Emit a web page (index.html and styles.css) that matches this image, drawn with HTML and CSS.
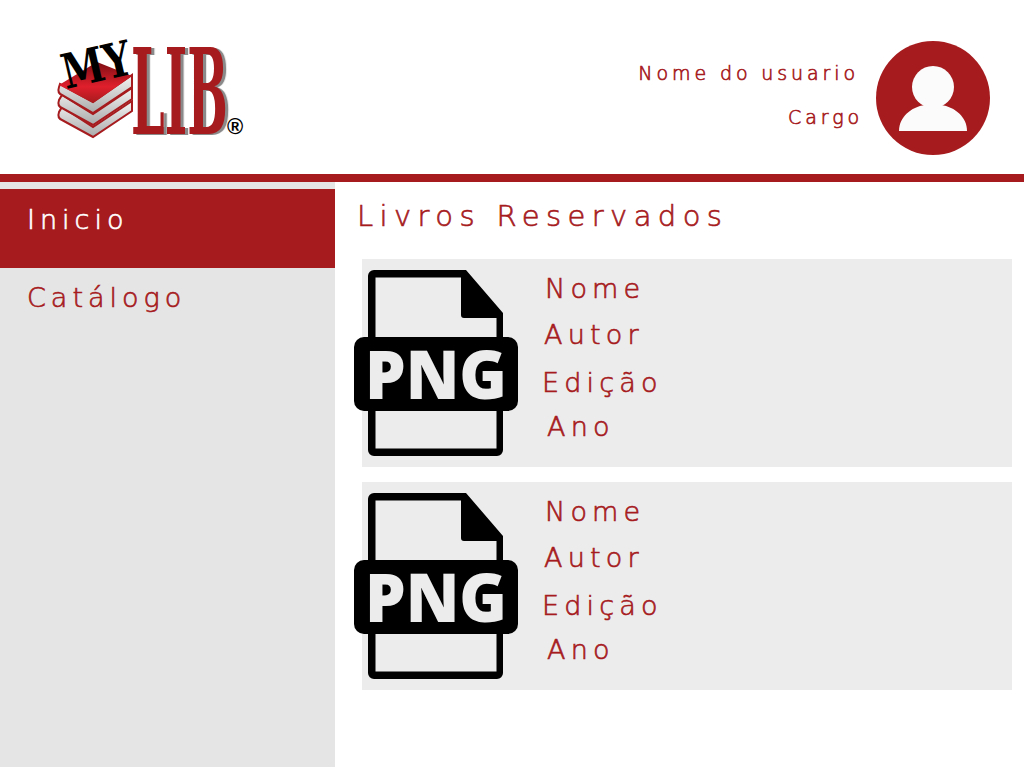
FILE: index.html
```html
<!DOCTYPE html>
<html lang="pt-BR">
<head>
    <meta charset="UTF-8">
    <meta name="viewport" content="width=device-width, initial-scale=1.0">
    <title>MyLib - Livros Reservados</title>
    <link rel="stylesheet" href="styles.css">
</head>
<body>

    <!-- Cabecalho -->
    <header>
        <svg class="logo" viewBox="40 10 220 160" width="220" height="160">
            <defs>
                <linearGradient id="capa" x1="0" y1="0" x2="0" y2="1">
                    <stop offset="0" stop-color="#7d0f14"/>
                    <stop offset="0.6" stop-color="#e01f2c"/>
                    <stop offset="1" stop-color="#a61b1e"/>
                </linearGradient>
                <linearGradient id="folhas" x1="0" y1="0" x2="0" y2="1">
                    <stop offset="0" stop-color="#f4f4f4"/>
                    <stop offset="1" stop-color="#aaaaaa"/>
                </linearGradient>
            </defs>
            <path d="M59 112 Q57 118 62 120 L93 137 L132 111 V101 L93 127 L62 107 Z" fill="url(#folhas)" stroke="#a61b1e" stroke-width="2"/>
            <path d="M59 100 Q57 106 62 108 L93 125 L132 99 V88 L93 114 L62 95 Z" fill="url(#folhas)" stroke="#a61b1e" stroke-width="2"/>
            <path d="M59 87 Q57 93 62 95 L93 113 L132 87 V75 L93 102 L60 84 Z" fill="url(#folhas)" stroke="#a61b1e" stroke-width="2"/>
            <path d="M59 85 L97 62 L132 76 L93 103 Z" fill="url(#capa)"/>
            <text class="logo-lib" transform="translate(131 134) scale(0.4 1)">LIB</text>
            <text class="logo-my" transform="translate(66 89) rotate(-13) scale(0.8 1)">MY</text>
            <text class="logo-reg" x="227" y="134">®</text>
        </svg>

        <div class="usuario">
            <div class="usuario-textos">
                <p class="usuario-nome">Nome do usuario</p>
                <p class="usuario-cargo">Cargo</p>
            </div>
            <svg class="avatar" viewBox="0 0 114 114" width="114" height="114">
                <circle cx="57" cy="57" r="57" fill="#a61b1e"/>
                <circle cx="57" cy="46" r="21" fill="#fbfbfb"/>
                <path d="M23 90 C23 76 35 66 49 64 H65 C79 66 91 76 91 90 Z" fill="#fbfbfb"/>
            </svg>
        </div>
    </header>

    <!-- Conteudo -->
    <div class="pagina">
        <nav class="menu">
            <a class="menu-item ativo" href="#">Inicio</a>
            <a class="menu-item" href="#">Catálogo</a>
        </nav>

        <main>
            <h1>Livros Reservados</h1>

            <div class="livro">
                <svg class="arquivo" viewBox="0 0 164 186" width="164" height="186">
                    <path fill-rule="evenodd" d="M20 0 H112 L149 43 V180 A6 6 0 0 1 143 186 H20 A6 6 0 0 1 14 180 V6 A6 6 0 0 1 20 0 Z M21.5 7.5 V178.5 H142.5 V48 H110 A3 3 0 0 1 107 45 V7.5 Z"/>
                    <rect x="0" y="67" width="164" height="74" rx="10"/>
                    <text x="82" y="129" textLength="142" lengthAdjust="spacingAndGlyphs">PNG</text>
                </svg>
                <div class="livro-dados">
                    <p class="dado-nome">Nome</p>
                    <p class="dado-autor">Autor</p>
                    <p class="dado-edicao">Edição</p>
                    <p class="dado-ano">Ano</p>
                </div>
            </div>

            <div class="livro">
                <svg class="arquivo" viewBox="0 0 164 186" width="164" height="186">
                    <path fill-rule="evenodd" d="M20 0 H112 L149 43 V180 A6 6 0 0 1 143 186 H20 A6 6 0 0 1 14 180 V6 A6 6 0 0 1 20 0 Z M21.5 7.5 V178.5 H142.5 V48 H110 A3 3 0 0 1 107 45 V7.5 Z"/>
                    <rect x="0" y="67" width="164" height="74" rx="10"/>
                    <text x="82" y="129" textLength="142" lengthAdjust="spacingAndGlyphs">PNG</text>
                </svg>
                <div class="livro-dados">
                    <p class="dado-nome">Nome</p>
                    <p class="dado-autor">Autor</p>
                    <p class="dado-edicao">Edição</p>
                    <p class="dado-ano">Ano</p>
                </div>
            </div>
        </main>
    </div>

</body>
</html>
```

FILE: styles.css
```css
/* Estilos gerais */
body {
    font-family: 'DejaVu Sans', Arial, sans-serif;
    font-weight: 200;
    margin: 0;
    padding: 0;
    background-color: #ffffff;
    color: #a61b1e;
    overflow: hidden;
}

p, h1 {
    margin: 0;
    font-weight: 200;
}

.usuario-textos, .menu-item, h1, .livro-dados {
    -webkit-text-stroke: 0.65px currentColor;
}

/* Cabecalho */
header {
    display: flex;
    justify-content: space-between;
    height: 174px;
    border-bottom: 8px solid #a61b1e;
}

.logo {
    margin: 10px 0 0 40px;
}

.logo-lib {
    font-family: 'DejaVu Serif', serif;
    font-weight: bold;
    font-size: 120px;
    fill: #a61b1e;
    filter: drop-shadow(8px 1px 0 #8a8a8a);
}

.logo-my {
    font-family: 'DejaVu Serif', serif;
    font-weight: bold;
    font-size: 48px;
    fill: #000000;
}

.logo-reg {
    font-family: 'Liberation Sans', sans-serif;
    font-weight: bold;
    font-size: 22px;
    fill: #000000;
}

.usuario {
    display: flex;
    align-items: flex-start;
    gap: 15px;
    padding: 41px 34px 0 0;
}

.usuario-textos {
    display: flex;
    flex-direction: column;
    align-items: flex-end;
    font-size: 19px;
    letter-spacing: 3.9px;
    padding-top: 21px;
}

.usuario-nome {
    margin-right: 2px;
}

.usuario-cargo {
    margin-top: 22px;
    margin-right: -2px;
}

/* Layout principal */
.pagina {
    display: flex;
    height: 585px;
}

.menu {
    width: 335px;
    flex-shrink: 0;
    background-color: #e5e5e5;
    padding-top: 7px;
    box-sizing: border-box;
}

.menu-item {
    display: block;
    height: 79px;
    box-sizing: border-box;
    padding: 14px 0 0 27px;
    font-size: 27px;
    letter-spacing: 5px;
    color: #a61b1e;
    text-decoration: none;
}

.menu-item.ativo {
    background-color: #a61b1e;
    color: #ffffff;
    padding-top: 15px;
}

main {
    flex: 1;
    padding: 0 12px 0 27px;
}

h1 {
    font-size: 29px;
    letter-spacing: 6.4px;
    margin: 17px 0 16px -5px;
    height: 44px;
}

/* Cartoes de livro */
.livro {
    display: flex;
    height: 208px;
    margin-bottom: 15px;
    background-color: #ececec;
}

.arquivo {
    flex-shrink: 0;
    margin: 11px 0 0 -8px;
}

.arquivo text {
    font-family: 'Open Sans', sans-serif;
    font-weight: 800;
    font-size: 67px;
    text-anchor: middle;
    fill: #ececec;
}

.livro-dados {
    padding: 14px 0 0 27px;
    font-size: 27px;
    letter-spacing: 5.2px;
}

.livro-dados p {
    height: 46px;
}

.dado-autor {
    margin-left: -1px;
}

.livro-dados .dado-edicao {
    margin-left: -3px;
    margin-top: 2px;
    height: 44px;
}

.dado-ano {
    margin-left: 2px;
}
```
